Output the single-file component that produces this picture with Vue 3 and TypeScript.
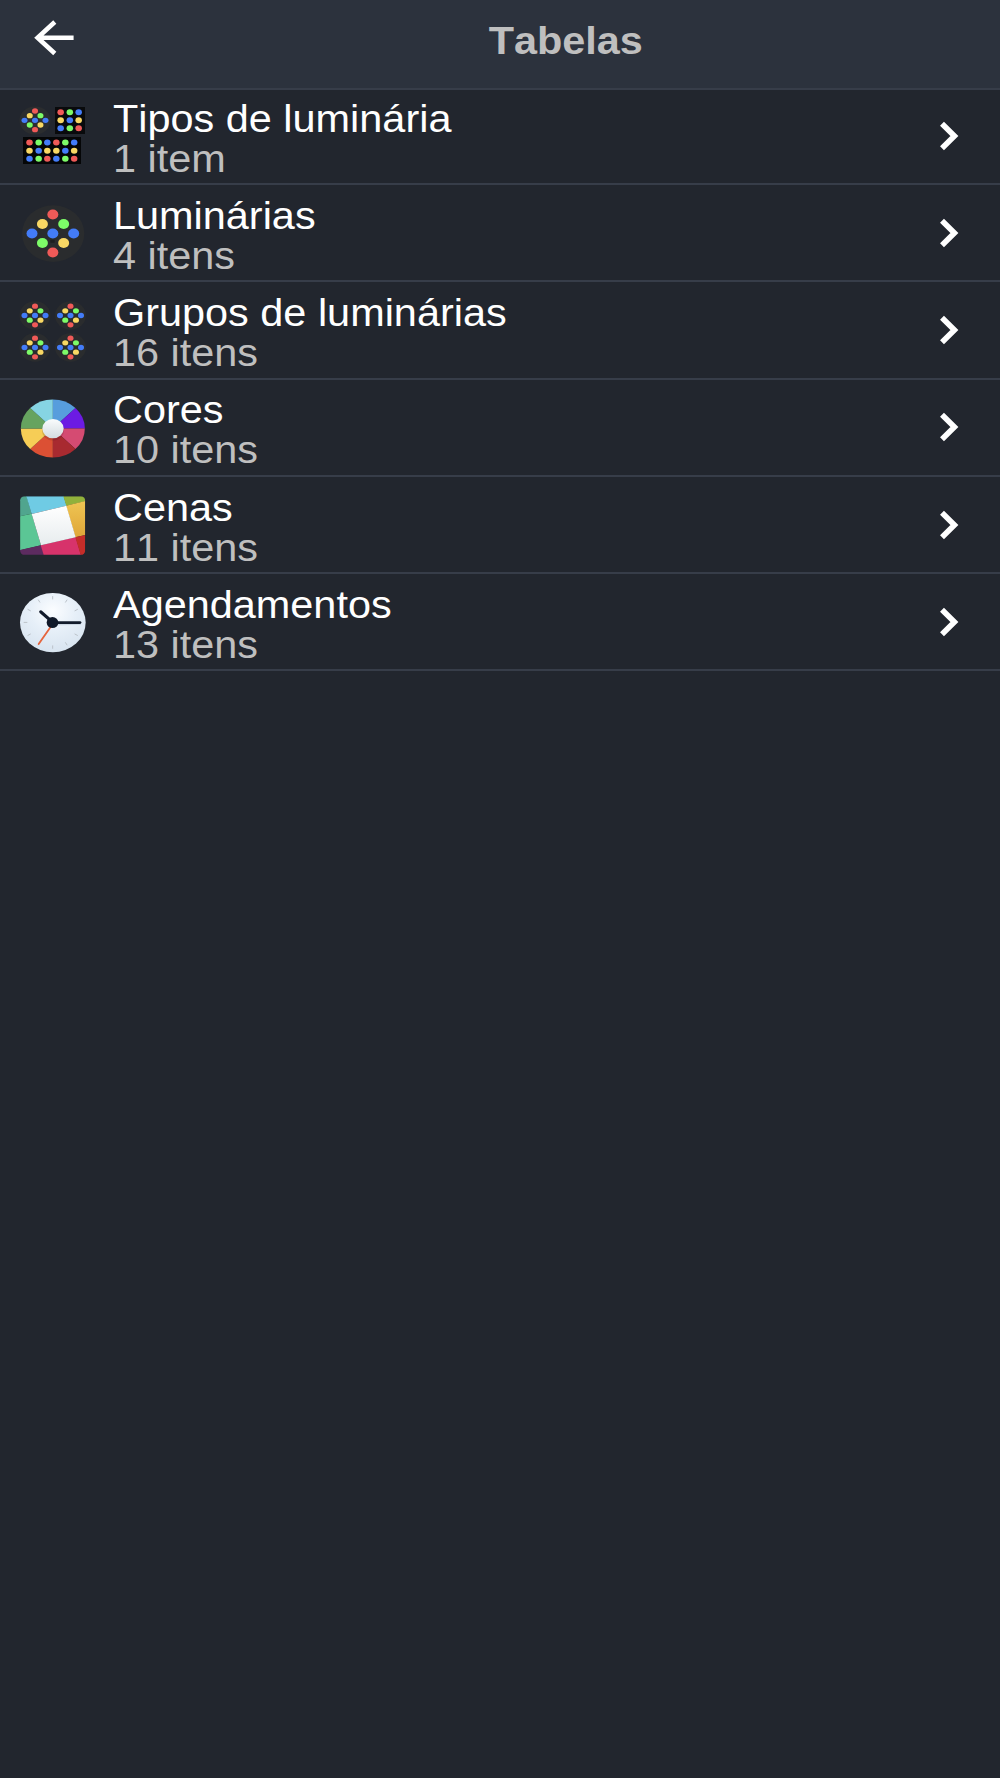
<script setup lang="ts">
type IconName = 'types' | 'lamp' | 'groups' | 'colors' | 'scenes' | 'clock'

interface Row {
  icon: IconName
  title: string
  count: string
  viewBox: string
}

interface Dot {
  x: number
  y: number
  color: string
}

const red = '#f05a58'
const green = '#7dfb68'
const blue = '#437cf8'
const yellow = '#f9d864'

const rows: Row[] = [
  { icon: 'types', title: 'Tipos de luminária', count: '1 item', viewBox: '24 27 210 192' },
  { icon: 'lamp', title: 'Luminárias', count: '4 itens', viewBox: '24 18.75 210 192' },
  { icon: 'groups', title: 'Grupos de luminárias', count: '16 itens', viewBox: '24 25.5 210 192' },
  { icon: 'colors', title: 'Cores', count: '10 itens', viewBox: '24 17.25 210 192' },
  { icon: 'scenes', title: 'Cenas', count: '11 itens', viewBox: '24 24 210 192' },
  { icon: 'clock', title: 'Agendamentos', count: '13 itens', viewBox: '24 30.75 210 192' },
]

// LED layout of a round fixture, in units of the outer ring
const lampDots: Dot[] = [
  { x: 0, y: -1, color: red },
  { x: -0.5, y: -0.5, color: yellow },
  { x: 0.52, y: -0.5, color: green },
  { x: -1, y: 0, color: blue },
  { x: 0, y: 0, color: blue },
  { x: 1, y: 0, color: blue },
  { x: -0.5, y: 0.5, color: green },
  { x: 0.52, y: 0.5, color: yellow },
  { x: 0, y: 1, color: red },
]

function grid(xs: number[], ys: number[], colors: string[][]): Dot[] {
  return ys.flatMap((y, r) => xs.map((x, c) => ({ x, y, color: colors[r][c] })))
}

const panelDots: Dot[] = [
  ...grid([152, 179.5, 206], [51.5, 76, 100], [
    [red, green, blue],
    [yellow, blue, yellow],
    [blue, green, red],
  ]),
  ...grid([58.5, 86, 112, 139, 166, 192.5], [142.5, 167, 191], [
    [red, green, blue, red, green, blue],
    [yellow, blue, yellow, yellow, blue, yellow],
    [blue, green, red, blue, green, red],
  ]),
]

const groupCenters = [
  { x: 75, y: 75 },
  { x: 181.5, y: 75 },
  { x: 75, y: 171 },
  { x: 181.5, y: 171 },
]

const wheelColors = ['#579ddd', '#6c1be3', '#d54b72', '#a82a30', '#dc5034', '#f6cd56', '#66a35f', '#86d4e3']

const wheel = wheelColors.map((color, i) => {
  const point = (k: number) => {
    const a = (k * Math.PI) / 4
    return `${(128.5 + 96 * Math.sin(a)).toFixed(2)} ${(114.5 - 87 * Math.cos(a)).toFixed(2)}`
  }
  return { color, d: `M128.5 114.5L${point(i)}A96 87 0 0 1 ${point(i + 1)}Z` }
})

const ticks = Array.from({ length: 12 }, (_, i) => {
  const a = (i * Math.PI) / 6
  const s = Math.sin(a)
  const c = Math.cos(a)
  return { x1: 128 + 76 * s, y1: 128 - 69 * c, x2: 128 + 87 * s, y2: 128 - 79 * c }
})
</script>

<template>
  <main class="screen">
    <header class="bar">
      <button class="back" aria-label="Voltar">
        <svg width="44" height="40" viewBox="0 0 44 40" fill="none" stroke="#fff" stroke-width="4.6">
          <path d="M23.8 4L6.6 19.7L23.8 35.5M7 19.7H42.6" />
        </svg>
      </button>
      <h1 class="heading"><span class="wide">Tabelas</span></h1>
    </header>

    <ul class="list">
      <li v-for="row in rows" :key="row.icon" class="row">
        <svg class="icon" width="70" height="64" :viewBox="row.viewBox">
          <template v-if="row.icon === 'types'">
            <ellipse cx="75" cy="76.5" rx="46.5" ry="42" fill="#2b2d2f" />
            <ellipse
              v-for="(d, i) in lampDots" :key="'l' + i"
              :cx="75 + d.x * 31.5" :cy="76 + d.y * 28" rx="9" ry="8" :fill="d.color"
            />
            <rect x="135" y="36" width="90" height="81" fill="#090a0c" />
            <rect x="39" y="126" width="174" height="81" fill="#050607" />
            <ellipse
              v-for="(d, i) in panelDots" :key="'p' + i"
              :cx="d.x" :cy="d.y" rx="9.8" ry="9" :fill="d.color"
            />
          </template>

          <template v-else-if="row.icon === 'lamp'">
            <ellipse cx="129.5" cy="116.5" rx="93.5" ry="85" fill="#2a2c2e" />
            <path d="M121 135h13v9h-13z" fill="#1d1f20" />
            <ellipse
              v-for="(d, i) in lampDots" :key="i"
              :cx="128.5 + d.x * 62.5" :cy="116.5 + d.y * 57" rx="16.5" ry="15" :fill="d.color"
            />
          </template>

          <template v-else-if="row.icon === 'groups'">
            <g v-for="(g, n) in groupCenters" :key="n">
              <ellipse :cx="g.x" :cy="g.y" rx="46.5" ry="42.5" fill="#2a2c2e" />
              <ellipse
                v-for="(d, i) in lampDots" :key="i"
                :cx="g.x + d.x * 31.5" :cy="g.y + d.y * 28" rx="9" ry="8" :fill="d.color"
              />
            </g>
          </template>

          <template v-else-if="row.icon === 'colors'">
            <defs>
              <linearGradient id="hub" x1="0" y1="0" x2="0" y2="1">
                <stop offset="0" stop-color="#fafcfd" />
                <stop offset="1" stop-color="#d3dce0" />
              </linearGradient>
            </defs>
            <path v-for="(w, i) in wheel" :key="i" :d="w.d" :fill="w.color" />
            <ellipse cx="129" cy="121" rx="33" ry="30" fill="#301018" opacity=".16" />
            <ellipse cx="129" cy="115" rx="32" ry="29" fill="url(#hub)" />
          </template>

          <template v-else-if="row.icon === 'scenes'">
            <defs>
              <clipPath id="tile"><rect x="30.5" y="34" width="195" height="175.5" rx="13" ry="12" /></clipPath>
              <linearGradient id="paper" x1="0" y1="0" x2="0" y2="1">
                <stop offset="0" stop-color="#fff" />
                <stop offset="1" stop-color="#e7ecee" />
              </linearGradient>
              <linearGradient id="gold" x1="0" y1="0" x2="0" y2="1">
                <stop offset="0" stop-color="#efc553" />
                <stop offset="1" stop-color="#dfa639" />
              </linearGradient>
            </defs>
            <g clip-path="url(#tile)">
              <path d="M30 34H50L65 86L30 94Z" fill="#50a58e" />
              <path d="M49 34H161L170 62L65 87Z" fill="#6fcbe4" />
              <path d="M160 34H226V49L169 62Z" fill="#91b13b" />
              <path d="M30 94L65 86L93 181L30 196Z" fill="#5bc695" />
              <path d="M168 62L226 48V150L196 157Z" fill="url(#gold)" />
              <path d="M30 195L93 181L102 210H30Z" fill="#5d2b60" />
              <path d="M92 181L197 156L213 210H101Z" fill="#d7336b" />
              <path d="M196 157L226 150V210H212Z" fill="#c52d29" />
              <path d="M65 87L169 62L197 157L93 181Z" fill="url(#paper)" />
            </g>
          </template>

          <template v-else>
            <defs>
              <radialGradient id="dial" cx=".5" cy=".3" r=".7">
                <stop offset="0" stop-color="#fbfdff" />
                <stop offset=".5" stop-color="#e6eff8" />
                <stop offset="1" stop-color="#d8e4f0" />
              </radialGradient>
            </defs>
            <ellipse cx="128.5" cy="128.5" rx="98.5" ry="89" fill="url(#dial)" />
            <line
              v-for="(t, i) in ticks" :key="i"
              :x1="t.x1" :y1="t.y1" :x2="t.x2" :y2="t.y2" stroke="#bcc3ca" stroke-width="3"
            />
            <path d="M132 135L213 133" stroke="#b8c5d3" stroke-width="4" opacity=".6" />
            <path d="M128 133L86 193" stroke="#e5653e" stroke-width="5.5" stroke-linecap="round" />
            <path d="M128 127.5L92 96" stroke="#131c2c" stroke-width="9" stroke-linecap="round" />
            <path d="M128 128.5H210" stroke="#131c2c" stroke-width="8" stroke-linecap="round" />
            <ellipse cx="127.5" cy="128.5" rx="17.5" ry="16.5" fill="#101929" />
          </template>
        </svg>

        <div class="text">
          <span class="wide title">{{ row.title }}</span>
          <span class="wide count">{{ row.count }}</span>
        </div>

        <svg class="chevron" width="30" height="40" viewBox="0 0 30 40" fill="none" stroke="#fff" stroke-width="5.6">
          <path d="M7 7.8L19.4 20L7 32.2" />
        </svg>
      </li>
    </ul>
  </main>
</template>

<style scoped>
.screen {
  height: 1778px;
  background: #22262e;
  font-family: "Liberation Sans", Arial, sans-serif;
  font-size: 38px;
  font-kerning: none;
  line-height: 40px;
  color: #fff;
}

.bar {
  box-sizing: border-box;
  height: 90px;
  display: flex;
  align-items: flex-start;
  background: #2c323d;
  border-bottom: 2px solid #373d49;
}

.back {
  display: flex;
  box-sizing: border-box;
  width: 132px;
  height: 88px;
  padding: 18px 0 0 31px;
  border: 0;
  background: none;
}

.heading {
  flex: 1;
  margin: 0;
  padding-top: 21px;
  display: flex;
  justify-content: center;
  font-size: 38px;
  font-weight: 700;
  color: #bfbfbf;
}

.wide {
  display: block;
  white-space: nowrap;
  transform: scaleX(1.09);
  transform-origin: left center;
}

.heading .wide {
  transform-origin: center;
}

.list {
  margin: 0;
  padding: 0;
  list-style: none;
}

.row {
  box-sizing: border-box;
  height: 97.25px;
  display: flex;
  align-items: flex-end;
  padding: 0 35px 0 18px;
  border-bottom: 2px solid #373d49;
}

.row:first-child {
  height: 95px;
}

.icon {
  flex: none;
  margin-bottom: 15px;
}

.text {
  flex: 1;
  display: flex;
  flex-direction: column;
  align-items: flex-start;
  margin: 0 0 4.5px 25px;
}

.count {
  color: #bfbfbf;
}

.chevron {
  flex: none;
  margin-bottom: 27.3px;
}
</style>

<style>
body {
  background: #22262e;
}
</style>
